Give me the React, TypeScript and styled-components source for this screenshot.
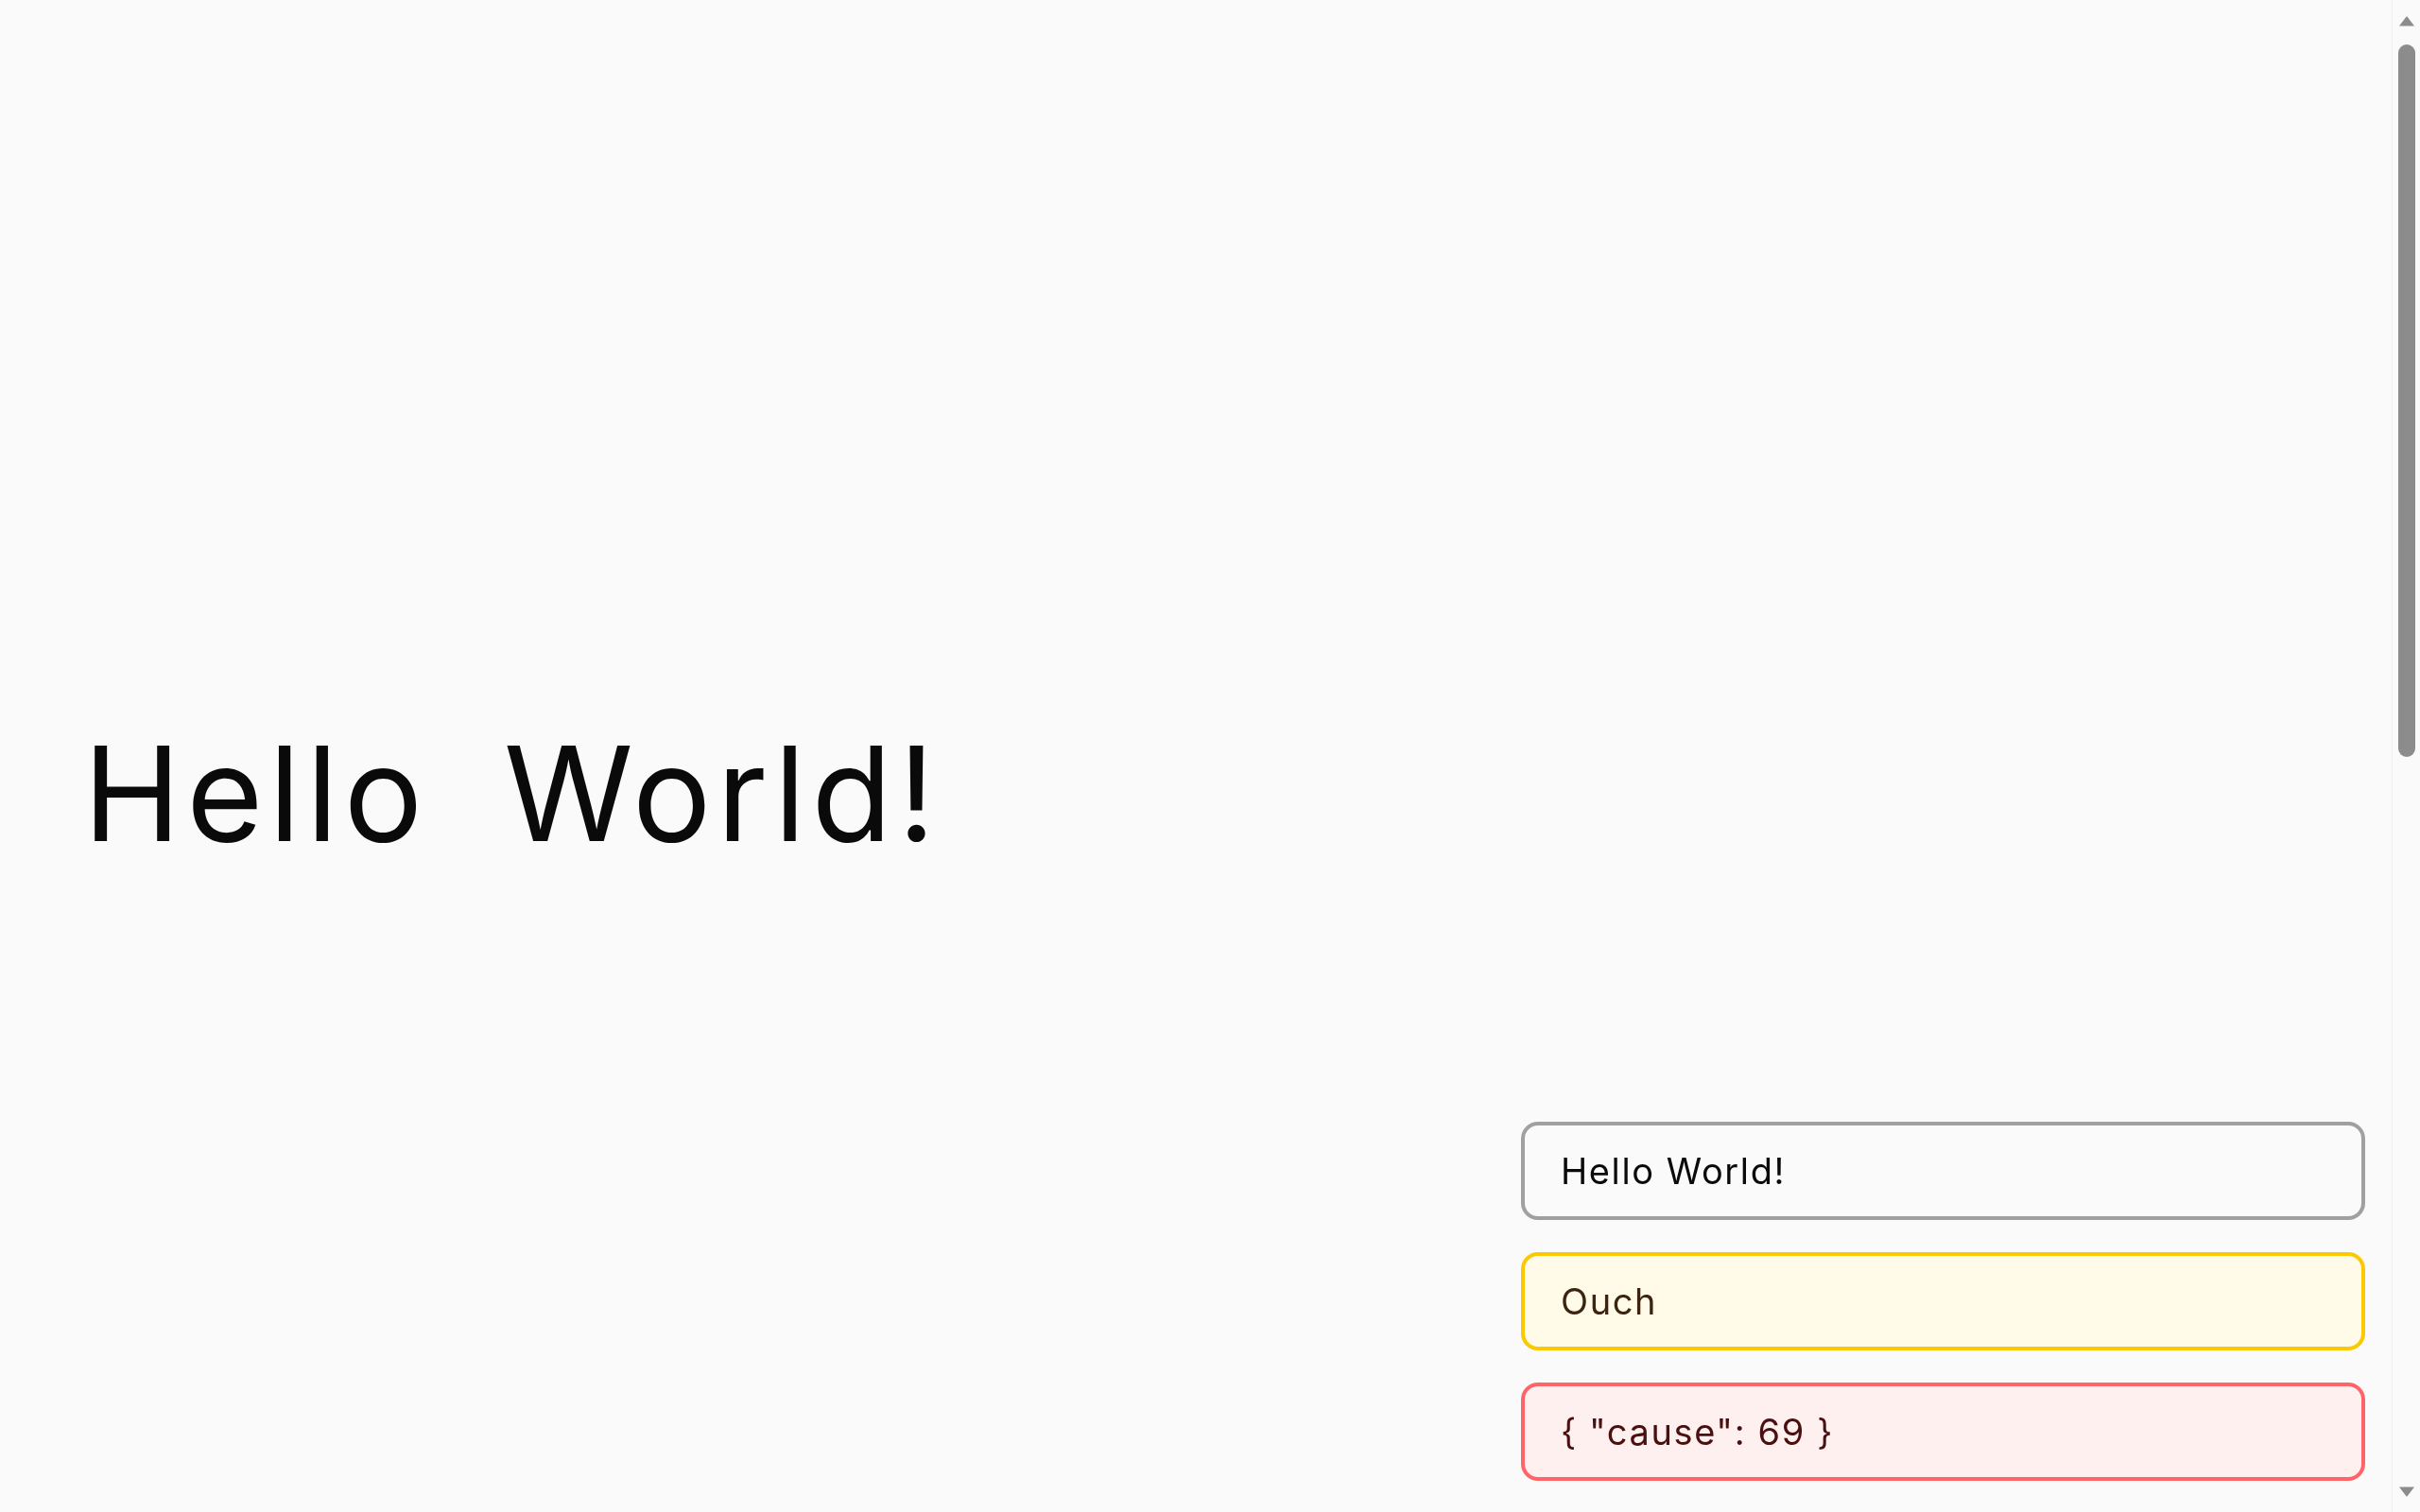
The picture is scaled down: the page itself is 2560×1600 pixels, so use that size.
import React from "react";
import styled, { createGlobalStyle } from "styled-components";

const GlobalStyle = createGlobalStyle`
  html, body {
    margin: 0;
    padding: 0;
    background: #fafafa;
  }
  body {
    font-family: Inter, "Noto Sans", sans-serif;
    color: #0a0a0a;
  }
`;

const Page = styled.main`
  display: flex;
  flex-direction: column;
`;

const Hero = styled.section`
  min-height: 100vh;
  display: flex;
  align-items: center;
  padding-left: 88px;
  box-sizing: border-box;
`;

const Spacer = styled.section`
  min-height: 100vh;
`;

const Title = styled.h1`
  margin: 0;
  font-family: Inter, "Noto Sans", sans-serif;
  font-weight: 400;
  font-size: 139px;
  line-height: 1.2;
  letter-spacing: 6px;
  color: #0a0a0a;
  display: flex;
  gap: 80px;
  transform: translateY(40px);
`;

const ToastStack = styled.div`
  position: fixed;
  right: 58px;
  bottom: 33px;
  width: 893px;
  display: flex;
  flex-direction: column;
  gap: 34px;
`;

type Tone = "neutral" | "warning" | "error";

const tones: Record<Tone, { border: string; bg: string; fg: string }> = {
  neutral: { border: "#a0a0a0", bg: "#fafafa", fg: "#0a0a0a" },
  warning: { border: "#fcc800", bg: "#fffbe8", fg: "#3d2410" },
  error: { border: "#ff6468", bg: "#fff0f0", fg: "#4a1010" },
};

const Toast = styled.div<{ $tone: Tone }>`
  box-sizing: border-box;
  height: 104px;
  display: flex;
  align-items: center;
  padding: 0 38px;
  border: 4px solid ${(p) => tones[p.$tone].border};
  border-radius: 18px;
  background: ${(p) => tones[p.$tone].bg};
  color: ${(p) => tones[p.$tone].fg};
  font-family: Inter, "Noto Sans", sans-serif;
  font-size: 38px;
  letter-spacing: 1.6px;
`;

/* Window scrollbar, drawn over the right edge of the page */
const ScrollRail = styled.div`
  position: fixed;
  top: 0;
  right: 0;
  bottom: 0;
  width: 30px;
  box-sizing: border-box;
  border-left: 1px solid #efefef;
  background: #fafafa;
  display: flex;
  flex-direction: column;
  align-items: center;
  padding: 17px 0 16px 1px;
`;

const Thumb = styled.div`
  width: 18px;
  height: 754px;
  margin-top: 18px;
  border-radius: 9px;
  background: #8c8c8c;
`;

const RailFill = styled.div`
  flex: 1;
`;

const Arrow = ({ down }: { down?: boolean }) => (
  <svg width="18" height="12" viewBox="0 0 18 12" aria-hidden="true">
    <path
      d={down ? "M1 1.5 H17 L9.8 11 Q9 12 8.2 11 Z" : "M1 10.5 H17 L9.8 1 Q9 0 8.2 1 Z"}
      fill="#8c8c8c"
    />
  </svg>
);

export default function App() {
  return (
    <>
      <GlobalStyle />
      <Page>
        <Hero>
          <Title>
            <span>Hello</span>
            <span>World!</span>
          </Title>
        </Hero>
        <Spacer />
      </Page>
      <ToastStack>
        <Toast $tone="neutral">Hello World!</Toast>
        <Toast $tone="warning">Ouch</Toast>
        <Toast $tone="error">{'{ "cause": 69 }'}</Toast>
      </ToastStack>
      <ScrollRail aria-hidden="true">
        <Arrow />
        <Thumb />
        <RailFill />
        <Arrow down />
      </ScrollRail>
    </>
  );
}
